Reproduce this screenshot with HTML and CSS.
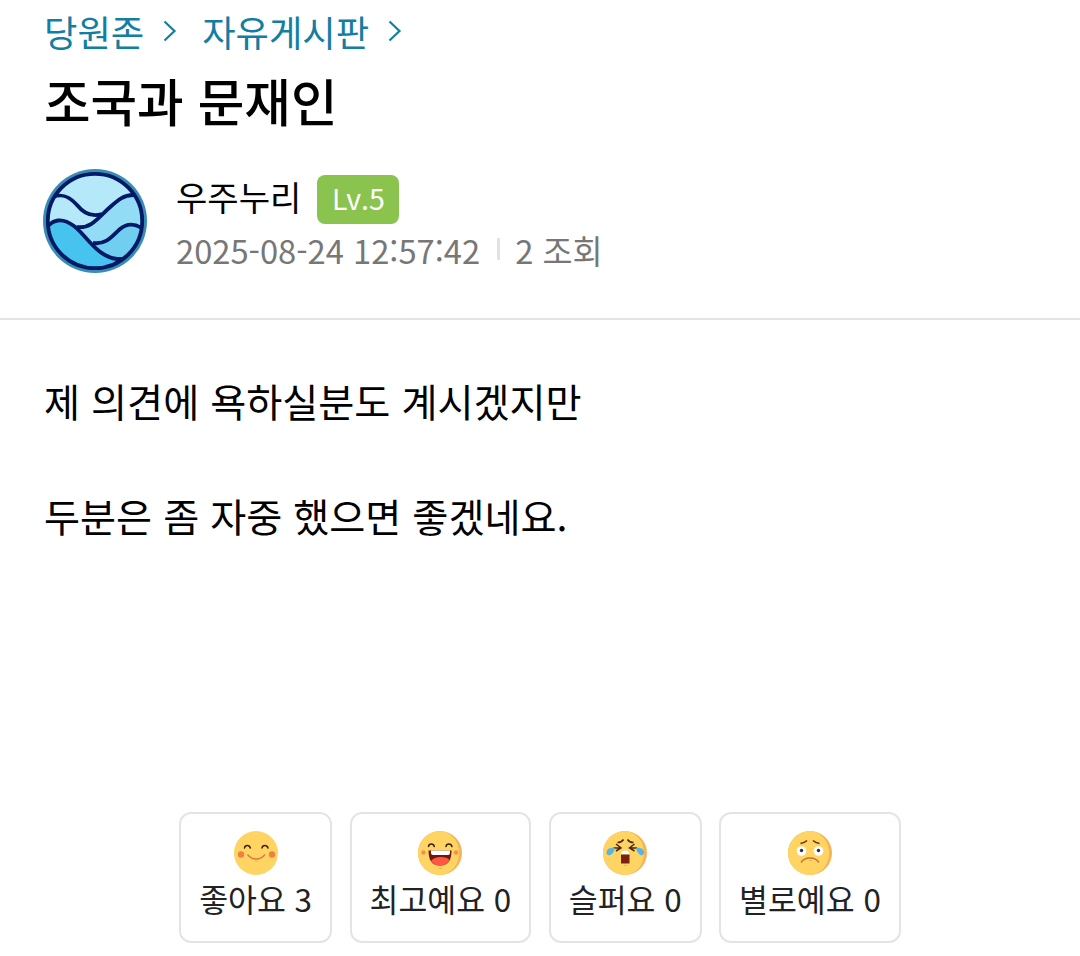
FILE: index.html
```html
<!DOCTYPE html>
<html lang="ko">
<head>
<meta charset="UTF-8">
<meta name="viewport" content="width=device-width, initial-scale=1.0">
<title>조국과 문재인</title>
<link rel="stylesheet" href="styles.css">
</head>
<body>

<div class="post-header">
    <div class="breadcrumb">
        <a href="#">당원존</a>
        <svg class="arrow" viewBox="0 0 14 22"><path d="M1.5 1.5 L11.5 11 L1.5 20.5"/></svg>
        <a href="#">자유게시판</a>
        <svg class="arrow" viewBox="0 0 14 22"><path d="M1.5 1.5 L11.5 11 L1.5 20.5"/></svg>
    </div>
    <h1 class="title">조국과 문재인</h1>
    <div class="author">
        <svg class="avatar" viewBox="0 0 104 104">
            <defs>
                <clipPath id="waves"><circle cx="52" cy="52" r="47"/></clipPath>
            </defs>
            <circle cx="52" cy="52" r="52" fill="#3b8cb5"/>
            <g clip-path="url(#waves)">
                <circle cx="52" cy="52" r="47" fill="#b5e8f9"/>
                <path fill="#93dcf5" d="M34 58 C48 60 56 48 66 39 C74 32 80 26 90 26 L104 28 V104 H34 Z"/>
                <path fill="#70cff0" d="M50 74 C64 76 70 66 77 60 C83 55 90 53 100 60 L104 104 H60 Z"/>
                <path fill="#47c3ef" d="M0 62 C8 50 19 48 31 57 C43 66 54 88 74 90 L84 90 L70 104 H0 Z"/>
                <g fill="none" stroke="#001a66" stroke-width="3.8">
                    <path d="M10 28 C20 24 27 28 34 36 C42 46 50 48 59 45"/>
                    <path d="M34 58 C48 60 56 48 66 39 C74 32 80 26 90 26 L98 28"/>
                    <path d="M50 74 C64 76 70 66 77 60 C83 55 90 53 100 60"/>
                    <path d="M2 61 C9 50 19 48 31 57 C43 66 54 88 74 90 L84 90"/>
                </g>
            </g>
            <circle cx="52" cy="52" r="47.2" fill="none" stroke="#001a66" stroke-width="3.8"/>
        </svg>
        <div class="author-info">
            <div class="name-row">
                <span class="name">우주누리</span>
                <span class="level">Lv.5</span>
            </div>
            <div class="meta">
                <span>2025-08-24 12:57:42</span>
                <span class="divider"></span>
                <span>2 조회</span>
            </div>
        </div>
    </div>
</div>

<div class="content">
    <p>제 의견에 욕하실분도 계시겠지만</p>
    <p>두분은 좀 자중 했으면 좋겠네요.</p>
</div>

<div class="reactions">
    <button class="reaction">
        <svg class="face" viewBox="0 0 44 44">
            <circle cx="22" cy="22" r="22" fill="#ffd462"/>
            <g fill="none" stroke="#3a1e12" stroke-width="1.5" stroke-linecap="round">
                <path d="M10.5 17 C11 13.5 15.5 13.5 16.3 17"/>
                <path d="M28 17 C28.5 13.5 33 13.5 34 17"/>
            </g>
            <circle cx="7" cy="23.5" r="3.2" fill="#f07f44"/>
            <circle cx="38" cy="23.5" r="3.2" fill="#f07f44"/>
            <path d="M13.5 23.5 C18 29.5 26.5 29.5 31 23.5" fill="none" stroke="#cf8040" stroke-width="1.3"/>
            <path d="M21 30 H24" stroke="#efb04e" stroke-width="1"/>
        </svg>
        <span>좋아요 3</span>
    </button>
    <button class="reaction">
        <svg class="face" viewBox="0 0 44 44">
            <circle cx="22" cy="22" r="22" fill="#f4b459"/>
            <path fill="#ffd462" d="M22 0 A22 22 0 0 0 22 44 C33 43 41 34 41 22 C41 10 33 1 22 0 Z"/>
            <g fill="none" stroke="#3a1e12" stroke-width="1.5" stroke-linecap="round">
                <path d="M10.5 15.5 C11 12 15.5 12 16.3 15.5"/>
                <path d="M28 15.5 C28.5 12 33 12 34 15.5"/>
            </g>
            <circle cx="5.5" cy="21.5" r="2.2" fill="#ef9349"/>
            <circle cx="38" cy="21.5" r="2.2" fill="#ef9349"/>
            <path fill="#6e1712" d="M10.5 19.5 H33.5 C33.5 29.5 30 34.5 22 34.5 C14 34.5 10.5 29.5 10.5 19.5 Z"/>
            <path fill="#fff" d="M13 19.5 H32 V22 Q32 24 30 24 H15 Q13 24 13 22 Z"/>
            <path fill="#ff5740" d="M13 30 C16 25.5 28 24.5 31.5 29 C29.5 33 27 34.5 22 34.5 C18 34.5 15 33 13 30 Z"/>
            <path d="M21 37.5 H24" stroke="#efb04e" stroke-width="1"/>
        </svg>
        <span>최고예요 0</span>
    </button>
    <button class="reaction">
        <svg class="face" viewBox="0 0 44 44">
            <circle cx="22" cy="22" r="22" fill="#f4b459"/>
            <path fill="#ffd462" d="M22 0 A22 22 0 0 0 22 44 C33 43 41 34 41 22 C41 10 33 1 22 0 Z"/>
            <g fill="none" stroke="#4d2612" stroke-width="1.5">
                <path d="M14.5 11.5 C17.5 11.5 19.5 10 20.5 8.5"/>
                <path d="M24.5 8.5 C26 11 28 11.5 30.5 11.5"/>
                <path d="M13 13 L18 17 L13 20 M10.5 17 H18"/>
                <path d="M31.5 13 L26.5 17 L31.5 20 M34 17 H26.5"/>
            </g>
            <path fill="#5bb4df" d="M12 17 C7 16 3 18.5 3.5 22 C4.5 26 10 25 12 17 Z"/>
            <path fill="#5bb4df" d="M33 17 C38 16 41.5 18.5 41 22 C40 26 35 25 33 17 Z"/>
            <path fill="#fff" d="M18 23.5 C18 18 26.5 18 26.5 23.5 Z"/>
            <rect x="18" y="23.5" width="8.5" height="9" fill="#7d2010"/>
            <path d="M21 34.5 H24" stroke="#efb04e" stroke-width="1"/>
        </svg>
        <span>슬퍼요 0</span>
    </button>
    <button class="reaction">
        <svg class="face" viewBox="0 0 44 44">
            <circle cx="22" cy="22" r="22" fill="#f4b459"/>
            <path fill="#ffd462" d="M22 0 A22 22 0 0 0 22 44 C33 43 41 34 41 22 C41 10 33 1 22 0 Z"/>
            <g fill="none" stroke="#65351a" stroke-width="1.5">
                <path d="M12.5 12.5 C15.5 12 17.5 11 19 9.5"/>
                <path d="M25 9.5 C26.5 11 28.5 12 31.5 12.5"/>
            </g>
            <circle cx="13.5" cy="20" r="4.8" fill="#fff"/>
            <circle cx="30.5" cy="20" r="4.8" fill="#fff"/>
            <circle cx="13.5" cy="19.5" r="1.7" fill="#243344"/>
            <circle cx="30.5" cy="19.5" r="1.7" fill="#243344"/>
            <path d="M13 31.5 C17 25.5 27 25.5 31 31.5" fill="none" stroke="#bd7530" stroke-width="1.4"/>
            <path d="M21 29.5 H24" stroke="#efb04e" stroke-width="1"/>
        </svg>
        <span>별로예요 0</span>
    </button>
</div>

</body>
</html>
```
FILE: styles.css
```css
* {
    box-sizing: border-box;
}

body {
    font-family: "Noto Sans CJK KR", sans-serif;
    background-color: #fff;
    color: #000;
    margin: 0;
    padding: 0;
}

.post-header {
    height: 320px;
    padding: 5px 43px 0;
    border-bottom: 2px solid #e4e4e4;
}

.breadcrumb {
    display: flex;
    align-items: center;
    height: 52px;
    padding-left: 1px;
    font-size: 36.3px;
}

.breadcrumb a {
    color: #127ea2;
    text-decoration: none;
}

.arrow {
    width: 14px;
    height: 22px;
    margin: 0 25px 0 19px;
    fill: none;
    stroke: #127ea2;
    stroke-width: 2.2;
}

.title {
    margin: 6px 0 0 1px;
    font-size: 50.6px;
    font-weight: 500;
    line-height: 74px;
}

.author {
    display: flex;
    gap: 29px;
    margin-top: 32px;
}

.avatar {
    width: 104px;
    height: 104px;
}

.author-info {
    padding-top: 6px;
}

.name-row {
    display: flex;
    gap: 16px;
    height: 49px;
}

.name {
    font-size: 34.1px;
    line-height: 43px;
}

.level {
    width: 82px;
    height: 49px;
    border-radius: 8px;
    background-color: #8bc34f;
    color: #fff;
    font-size: 28.5px;
    line-height: 46px;
    text-align: center;
}

.meta {
    display: flex;
    align-items: center;
    height: 50px;
    color: #777;
    font-size: 32.7px;
}

.divider {
    width: 3px;
    height: 22px;
    margin: 0 15px 0 17px;
    background-color: #e2e2e2;
}

.content {
    height: 492px;
    padding: 51px 44px 0;
    font-size: 39.2px;
    line-height: 58px;
}

.content p {
    margin: 0 0 57px;
}

.reactions {
    display: flex;
    justify-content: center;
    gap: 17.5px;
}

.reaction {
    display: flex;
    flex-direction: column;
    align-items: center;
    height: 131px;
    padding: 17px 18px 0;
    border: 2px solid #e4e4e4;
    border-radius: 12px;
    background-color: #fff;
    color: #222;
    font-family: inherit;
    font-size: 31.4px;
    line-height: 46px;
    cursor: pointer;
}

.face {
    width: 44px;
    height: 44px;
    margin-bottom: 1px;
}
```
